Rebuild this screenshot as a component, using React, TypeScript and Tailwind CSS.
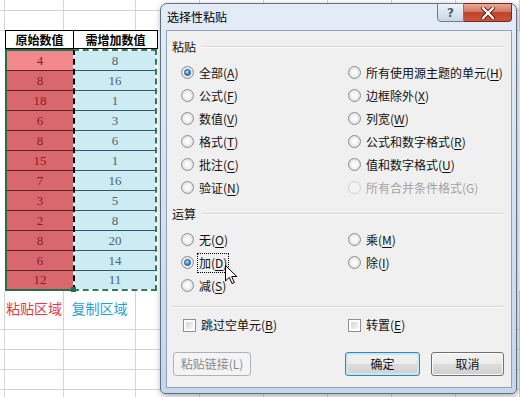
import React from "react";

const leftVals = [4, 8, 18, 6, 8, 15, 7, 3, 2, 8, 6, 12];
const rightVals = [8, 16, 1, 3, 6, 1, 16, 5, 8, 20, 14, 11];

function Radio({ checked, disabled }: { checked?: boolean; disabled?: boolean }) {
  return (
    <span
      className={`flex h-[13px] w-[13px] shrink-0 items-center justify-center rounded-full border ${
        disabled
          ? "border-[#cfcfcf] bg-[#f3f3f3]"
          : "border-[#8a8d91] bg-[radial-gradient(circle_at_50%_50%,#fbfbfb_25%,#e2e2e2_70%,#cfcfcf_100%)]"
      }`}
    >
      {checked && (
        <span className="h-[7px] w-[7px] rounded-full border border-[#1b4f86] bg-[radial-gradient(circle_at_40%_35%,#bfe6ff_0%,#3d8fd8_55%,#175aa0_100%)]" />
      )}
    </span>
  );
}

function Check() {
  return (
    <span className="flex h-[13px] w-[13px] shrink-0 border border-[#8e8f8f] bg-white p-[2px]">
      <span className="h-full w-full bg-linear-to-br from-[#d4d4d4] to-[#f7f7f7]" />
    </span>
  );
}

function Opt({
  label,
  k,
  checked,
  disabled,
  focus,
}: {
  label: string;
  k: string;
  checked?: boolean;
  disabled?: boolean;
  focus?: boolean;
}) {
  return (
    <div className="flex h-[23px] items-center gap-[5px]">
      <Radio checked={checked} disabled={disabled} />
      <span
        className={`whitespace-nowrap leading-[16px] ${disabled ? "text-[#a3a3a3]" : "text-[#111]"} ${
          focus ? "outline outline-1 outline-dotted outline-black outline-offset-[1px]" : ""
        }`}
      >
        {label}(
        {disabled ? k : <span className="underline underline-offset-[2px]">{k}</span>})
      </span>
    </div>
  );
}

function GroupHeader({ title }: { title: string }) {
  return (
    <div className="flex h-[16px] items-center pl-[5px] pr-[8px]">
      <span className="leading-[16px] text-[#111]">{title}</span>
      <div className="ml-[6px] flex-1 border-t border-b border-t-[#d5d5d5] border-b-white" />
    </div>
  );
}

function Btn({ children, kind }: { children: React.ReactNode; kind: "normal" | "default" | "disabled" }) {
  const cls =
    kind === "disabled"
      ? "border-[#adb2b5] bg-[#f4f4f4] text-[#8a8a8a]"
      : kind === "default"
      ? "border-[#3c7fb1] bg-[linear-gradient(#f2f2f2,#ebebeb_50%,#dddddd_50%,#cfcfcf)] shadow-[inset_0_0_0_2px_#c4e9f9] text-[#111]"
      : "border-[#707070] bg-[linear-gradient(#f2f2f2,#ebebeb_50%,#dddddd_50%,#cfcfcf)] shadow-[inset_0_0_0_1px_#fbfbfb] text-[#111]";
  return (
    <div className={`flex h-[24px] items-center justify-center whitespace-nowrap rounded-[3px] border ${cls}`}>
      {children}
    </div>
  );
}

function GridRow({ h, last }: { h: number; last?: boolean }) {
  return (
    <div className="flex" style={{ height: h }}>
      <div className={`w-[6px] border-r border-[#d4d4d4] ${last ? "" : "border-b"}`} />
      <div className={`w-[68px] border-r border-[#d4d4d4] ${last ? "" : "border-b"}`} />
      <div className={`w-[84px] border-r border-[#d4d4d4] ${last ? "" : "border-b"}`} />
      {[0, 1, 2, 3, 4, 5].map((i) => (
        <div key={i} className={`w-[64px] shrink-0 border-r border-[#d4d4d4] ${last ? "" : "border-b"}`} />
      ))}
    </div>
  );
}

export default function App() {
  return (
    <div className="relative h-[397px] w-[520px] overflow-hidden bg-white font-['Noto_Sans_CJK_SC',sans-serif]">
      {/* Spreadsheet */}
      <div className="flex flex-col">
        <GridRow h={11} />
        <GridRow h={19} last />
        {/* header */}
        <div className="flex h-[19px]">
          <div className="w-[5px] border-t border-[#d4d4d4]" />
          <div className="flex w-[69px] items-center justify-center whitespace-nowrap border border-black text-[12px] font-bold leading-none text-black">
            原始数值
          </div>
          <div className="flex w-[84px] items-center justify-center whitespace-nowrap border-y border-r border-black text-[12px] font-bold leading-none text-black">
            需增加数值
          </div>
          <div className="flex-1 border-t border-[#d4d4d4]" />
        </div>
        {/* data block */}
        <div className="flex h-[242px]">
          <div className="w-[5px]" />
          <div className="flex w-[68px] flex-col border-y-2 border-l-2 border-[#217148]">
            {leftVals.map((v, i) => (
              <div
                key={i}
                className={`flex items-center justify-center font-['Liberation_Serif',serif] text-[13px] text-[#8a1a1f] ${
                  i === 0 ? "bg-[#f2898d]" : "bg-[#d9686e]"
                } ${i < 11 ? "h-[20px] border-b border-[#5c2326]" : "h-[18px]"}`}
              >
                {v}
              </div>
            ))}
          </div>
          <div className="flex w-[84px] flex-col border-2 border-dashed border-[#2f7d5c] border-l-black bg-white">
            {rightVals.map((v, i) => (
              <div
                key={i}
                className={`flex items-center justify-center bg-[#cdebf3] font-['Liberation_Serif',serif] text-[13px] text-[#4a6670] ${
                  i < 11 ? "h-[20px] border-b border-[#2f5966]" : "h-[18px]"
                }`}
              >
                {v}
              </div>
            ))}
          </div>
          <div className="flex-1" />
        </div>
        {/* labels row */}
        <div className="flex h-[39px]">
          <div className="w-[6px] border-r border-b border-[#d4d4d4]" />
          <div className="flex w-[68px] justify-center whitespace-nowrap border-r border-b border-[#d4d4d4] pt-[7px] text-[14px] leading-[20px] text-[#e5393c]">
            粘贴区域
          </div>
          <div className="flex w-[84px] justify-center whitespace-nowrap border-r border-b border-[#d4d4d4] pt-[7px] text-[14px] leading-[20px] text-[#2a9fd6]">
            复制区域
          </div>
          {[0, 1, 2, 3, 4, 5].map((i) => (
            <div key={i} className="w-[64px] shrink-0 border-r border-b border-[#d4d4d4]" />
          ))}
        </div>
        <GridRow h={20} />
        <GridRow h={20} />
        <GridRow h={20} />
        <GridRow h={20} />
      </div>

      {/* fill handle */}
      <div className="absolute left-[71px] top-[287px] h-[5px] w-[5px] bg-[#217148]" />

      {/* Dialog */}
      <div className="absolute left-[160px] top-[3px] flex h-[391px] w-[357px] flex-col rounded-t-[7px] rounded-b-[5px] border border-[#5d6f85] bg-linear-to-b from-[#e3ecf6] to-[#c4d7ec] pb-[5px] pl-[5px] pr-[4px] text-[12px] shadow-[1px_2px_6px_rgba(0,0,0,0.35)]">
        <div className="flex h-[26px] justify-between">
          <div className="pl-[1px] pt-[5px] leading-[16px] text-black">选择性粘贴</div>
          <div className="-mt-px flex h-[19px]">
            <div className="flex w-[27px] items-center justify-center rounded-bl-[4px] border border-[#6c7b8f] bg-linear-to-b from-[#eef3f9] to-[#c9d6e5] font-['DejaVu_Sans',sans-serif] text-[12px] font-bold text-[#4d5d72]">
              ?
            </div>
            <div className="flex w-[48px] items-center justify-center rounded-br-[4px] border border-l-0 border-[#6e2b22] bg-[linear-gradient(#e9a896,#d47763_45%,#c0442f_50%,#c9513a)]">
              <svg width="14" height="12" viewBox="0 0 14 12">
                <path d="M2 1 L12 11 M12 1 L2 11" stroke="#5a1d14" strokeWidth="4" strokeLinecap="round" />
                <path d="M2 1 L12 11 M12 1 L2 11" stroke="#ffffff" strokeWidth="2.2" strokeLinecap="round" />
              </svg>
            </div>
          </div>
        </div>
        <div className="flex flex-1 flex-col border border-[#8fa2b8] bg-[#f0f0f0] pt-[8px]">
          <GroupHeader title="粘贴" />
          <div className="mt-[6px] grid grid-cols-[167px_1fr] pl-[14px]">
            <Opt label="全部" k="A" checked />
            <Opt label="所有使用源主题的单元" k="H" />
            <Opt label="公式" k="F" />
            <Opt label="边框除外" k="X" />
            <Opt label="数值" k="V" />
            <Opt label="列宽" k="W" />
            <Opt label="格式" k="T" />
            <Opt label="公式和数字格式" k="R" />
            <Opt label="批注" k="C" />
            <Opt label="值和数字格式" k="U" />
            <Opt label="验证" k="N" />
            <Opt label="所有合并条件格式" k="G" disabled />
          </div>
          <div className="mt-[7px]">
            <GroupHeader title="运算" />
          </div>
          <div className="mt-[6px] grid grid-cols-[167px_1fr] pl-[14px]">
            <Opt label="无" k="O" />
            <Opt label="乘" k="M" />
            <Opt label="加" k="D" checked focus />
            <Opt label="除" k="I" />
            <Opt label="减" k="S" />
          </div>
          <div className="mx-[5px] mr-[8px] mt-[9px] border-t border-b border-t-[#d5d5d5] border-b-white" />
          <div className="mt-[7px] grid grid-cols-[165px_1fr] pl-[16px]">
            <div className="flex h-[20px] items-center gap-[5px]">
              <Check />
              <span className="text-[#111]">
                跳过空单元(<span className="underline underline-offset-[2px]">B</span>)
              </span>
            </div>
            <div className="flex h-[20px] items-center gap-[5px]">
              <Check />
              <span className="text-[#111]">
                转置(<span className="underline underline-offset-[2px]">E</span>)
              </span>
            </div>
          </div>
          <div className="mt-[17px] flex pl-[6px]">
            <div className="w-[78px]">
              <Btn kind="disabled">粘贴链接(L)</Btn>
            </div>
            <div className="ml-[94px] w-[75px]">
              <Btn kind="default">确定</Btn>
            </div>
            <div className="ml-[11px] w-[73px]">
              <Btn kind="normal">取消</Btn>
            </div>
          </div>
        </div>
      </div>

      {/* mouse cursor */}
      <svg className="absolute left-[225px] top-[265px]" width="13" height="20" viewBox="0 0 13 20">
        <path d="M0.5 0.5 L0.5 16 L4.3 12.3 L7 18.5 L9.3 17.5 L6.7 11.5 L11.8 11.5 Z" fill="#fff" stroke="#000" strokeWidth="1" strokeLinejoin="round" />
      </svg>
    </div>
  );
}
